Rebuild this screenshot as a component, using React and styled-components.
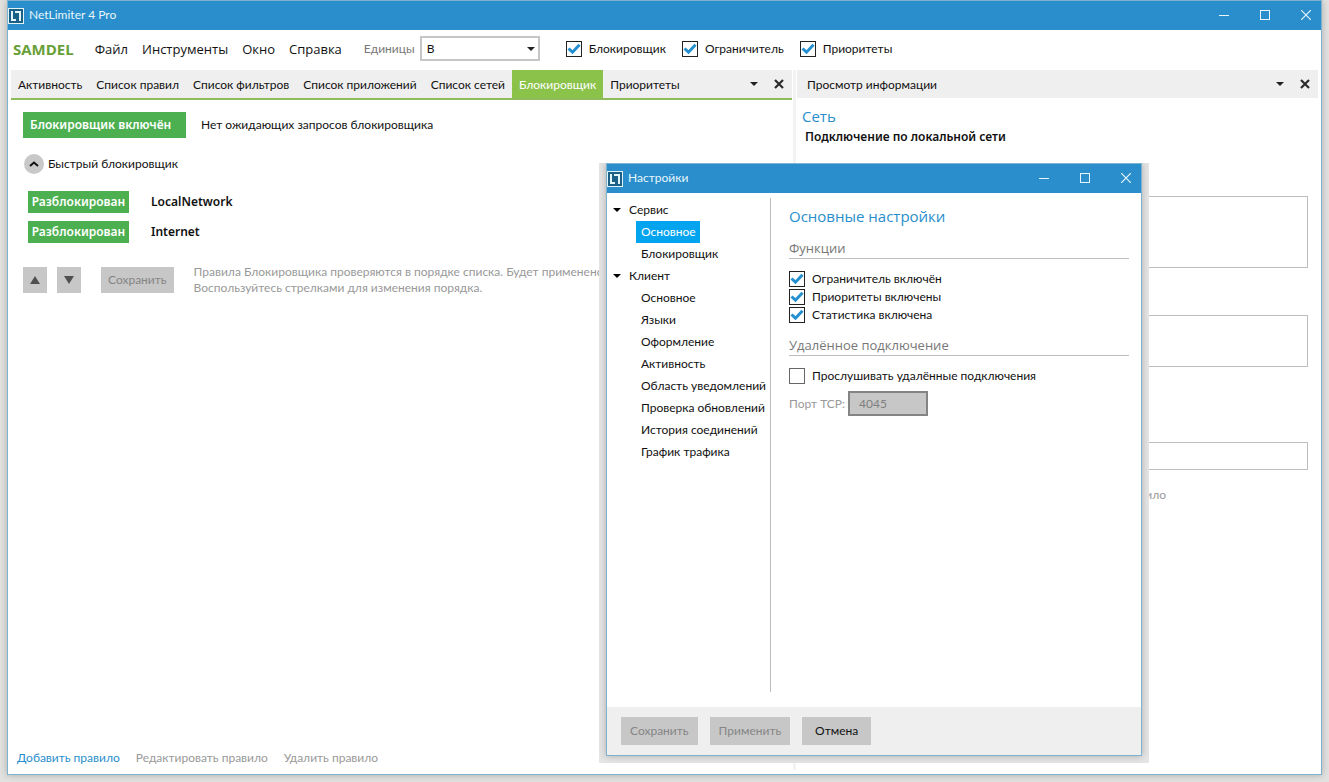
import { useState } from 'react';
import styled, { createGlobalStyle } from 'styled-components';

const GlobalStyle = createGlobalStyle`
  * {
    box-sizing: border-box;
  }
  body {
    margin: 0;
    background: #e2e2e1;
    color: #111;
    font-family: Lato, 'Noto Sans', sans-serif;
    font-size: 12px;
    line-height: 16px;
  }
  button, input, select {
    font: inherit;
    color: inherit;
  }
  button {
    border: 0;
    padding: 0;
    background: none;
  }
  h1, h2, h3, p, ul {
    margin: 0;
    padding: 0;
    font-weight: 400;
    list-style: none;
  }
`;

const Desktop = styled.div`
  position: relative;
  height: 100vh;
  padding: 0 7px 7px;
  overflow: hidden;
`;

const Window = styled.div`
  display: flex;
  flex-direction: column;
  height: 100%;
  background: #fff;
  border: 1px solid #7fb1d0;
  box-shadow: 0 0 7px rgba(0, 0, 0, 0.25);
`;

const TitleBar = styled.header`
  display: flex;
  align-items: center;
  gap: 5px;
  height: 29px;
  padding-right: 9px;
  background: #298ecb;
  color: #e8f6fc;
  flex: none;
`;

const Title = styled.h1`
  flex: 1;
  padding-bottom: 2px;
  font-size: 12px;
`;

const WindowButtons = styled.div`
  display: flex;
  gap: 29px;
  padding-bottom: 2px;
`;

const IconButton = styled.button`
  display: flex;
  align-items: center;
  justify-content: center;
  width: 12px;
  height: 16px;
`;

const MenuBar = styled.nav`
  display: flex;
  align-items: center;
  height: 40px;
  padding: 0 5px 3px;
  flex: none;
`;

const Brand = styled.strong`
  margin-right: 21px;
  color: #689f38;
  font-family: 'Open Sans', sans-serif;
  font-size: 15px;
`;

const MenuList = styled.div`
  display: flex;
  gap: 14px;
  margin-right: 22px;
`;

const MenuItem = styled.button`
  font-family: 'Open Sans', sans-serif;
  font-size: 13px;
`;

const UnitLabel = styled.label`
  margin-right: 5px;
  color: #777;
`;

const SelectWrap = styled.div`
  display: grid;
  align-items: center;
  width: 120px;
  margin-right: 26px;

  > * {
    grid-area: 1 / 1;
  }
  svg {
    justify-self: end;
    margin-right: 5px;
    pointer-events: none;
  }
`;

const Select = styled.select`
  appearance: none;
  width: 100%;
  height: 25px;
  padding: 0 5px;
  border: 2px solid #c6c6c6;
  border-radius: 0;
  background: #fff;
`;

const CheckList = styled.div`
  display: flex;
  flex-direction: ${({ $column }) => ($column ? 'column' : 'row')};
  gap: ${({ $column }) => ($column ? '2px' : '16px')};
`;

const CheckLabel = styled.label`
  display: flex;
  align-items: center;
  gap: 7px;
`;

const CheckBox = styled.span`
  display: grid;

  > * {
    grid-area: 1 / 1;
  }
  svg {
    pointer-events: none;
  }
`;

const CheckInput = styled.input`
  appearance: none;
  width: 16px;
  height: 16px;
  margin: 0;
  border: 1px solid #222;
  background: #fff;

  &:not(:checked) {
    border-color: #666;
  }
  &:not(:checked) + svg {
    display: none;
  }
`;

const Workspace = styled.main`
  display: grid;
  grid-template-columns: 781fr 3px 521fr;
  column-gap: 1px;
  flex: 1;
  min-height: 0;
  padding: 0 3px;
`;

const Splitter = styled.div`
  background: #f3f3f3;
  margin-bottom: 4px;
`;

const Pane = styled.section`
  display: flex;
  flex-direction: column;
  min-width: 0;
  overflow: hidden;
`;

const PaneBar = styled.div`
  display: flex;
  align-items: center;
  height: ${({ $accent }) => ($accent ? '30px' : '28px')};
  padding-right: 7px;
  background: #efefef;
  border-bottom: ${({ $accent }) => ($accent ? '2px solid #8fbc5a' : '0')};
  flex: none;
`;

const PaneTitle = styled.h2`
  padding: 2px 0 0 10px;
  font-size: 12px;
`;

const PaneTools = styled.div`
  display: flex;
  gap: 13px;
  margin-left: auto;
`;

const Tab = styled.button`
  height: 28px;
  padding: 2px 7px 0;
  white-space: nowrap;
  background: ${({ $active }) => ($active ? '#8bc34a' : 'none')};
  color: ${({ $active }) => ($active ? '#fff' : '#111')};
`;

const PaneBody = styled.div`
  display: flex;
  flex-direction: column;
  flex: 1;
  padding: 12px 12px 0;
`;

const StatusRow = styled.div`
  display: flex;
  align-items: center;
  gap: 15px;
`;

const GreenButton = styled.button`
  width: ${({ $large }) => ($large ? '163px' : '101px')};
  height: ${({ $large }) => ($large ? '26px' : '22px')};
  padding: ${({ $large }) => ($large ? '0 7px' : '0')};
  text-align: ${({ $large }) => ($large ? 'left' : 'center')};
  background: #4caf50;
  color: #fff;
  font-family: 'Noto Sans', sans-serif;
  font-weight: 600;
`;

const Expander = styled.button`
  display: flex;
  align-items: center;
  gap: 4px;
  margin: 16px 0 17px 1px;
`;

const Circle = styled.span`
  display: flex;
  align-items: center;
  justify-content: center;
  width: 20px;
  height: 20px;
  border-radius: 50%;
  background: #c8c8c8;
`;

const BlockList = styled.ul`
  display: flex;
  flex-direction: column;
  gap: 8px;
  padding-left: 5px;
`;

const BlockItem = styled.li`
  display: flex;
  align-items: center;
  gap: 22px;
  font-family: 'Noto Sans', sans-serif;
  font-weight: 600;
`;

const OrderRow = styled.div`
  display: flex;
  align-items: center;
  gap: 10px;
  margin-top: 21px;
`;

const GreyButton = styled.button`
  display: flex;
  align-items: center;
  justify-content: center;
  min-width: ${({ $icon }) => ($icon ? '24px' : '69px')};
  height: ${({ $tall }) => ($tall ? '28px' : '26px')};
  padding: ${({ $icon, $tall }) => ($icon ? '0' : $tall ? '0 9px' : '0 7px')};
  background: #c7c7c7;

  &:disabled {
    color: #858585;
  }
`;

const SaveSlot = styled.div`
  margin: 0 10px;
`;

const Hint = styled.p`
  color: #999;
  white-space: nowrap;
`;

const RuleLinks = styled.div`
  display: flex;
  gap: 16px;
`;

const RuleFooter = styled.footer`
  padding: 0 6px 8px;
`;

const RuleLink = styled.a`
  color: ${({ $muted }) => ($muted ? '#999' : '#298ecb')};
  text-decoration: none;
  white-space: nowrap;
`;

const InfoBody = styled.div`
  display: flex;
  flex-direction: column;
  padding: 8px 10px 0 8px;
`;

const InfoTitle = styled.h2`
  margin: 0 0 3px -3px;
  color: #298ecb;
  font-family: 'Open Sans', sans-serif;
  font-size: 15px;
  line-height: 20px;
`;

const InfoName = styled.strong`
  margin-bottom: 51px;
  font-family: 'Noto Sans', sans-serif;
  font-weight: 600;
`;

const InfoBox = styled.div`
  height: ${({ $height }) => $height}px;
  margin-bottom: ${({ $space }) => $space}px;
  border: 1px solid #bdbdbd;
`;

const DialogFrame = styled.div`
  position: absolute;
  left: 599px;
  top: 163px;
  width: 550px;
  height: 600px;
  padding: 0 7px 7px;
  overflow: hidden;
  background: #e5e5e5;
`;

const DialogBody = styled.div`
  display: grid;
  grid-template-columns: 164px 1fr;
  flex: 1;
  padding: 5px 12px 15px 0;
`;

const Tree = styled.ul`
  padding-top: 1px;
  padding-left: 6px;
  border-right: 1px solid #bdbdbd;
`;

const TreeGroup = styled.button`
  display: flex;
  align-items: center;
  gap: 8px;
  height: 22px;
`;

const TreeItem = styled.button`
  display: block;
  height: 22px;
  margin-left: 23px;
  padding: 0 4px 0 5px;
  white-space: nowrap;
  background: ${({ $active }) => ($active ? '#03a4ef' : 'none')};
  color: ${({ $active }) => ($active ? '#fff' : '#111')};
`;

const Settings = styled.div`
  padding: 8px 0 0 18px;
`;

const SettingsTitle = styled.h2`
  color: #298ecb;
  font-family: 'Open Sans', sans-serif;
  font-size: 15px;
  line-height: 20px;
`;

const SectionTitle = styled.h3`
  margin: 13px 0 12px;
  padding-bottom: 1px;
  border-bottom: 1px solid #bdbdbd;
  color: #777;
  font-family: 'Open Sans', sans-serif;
  font-size: 13px;
  line-height: 18px;
`;

const PortRow = styled.div`
  display: flex;
  align-items: center;
  gap: 3px;
  margin-top: 7px;
  color: #999;
`;

const PortInput = styled.input`
  width: 80px;
  height: 25px;
  padding: 0 9px;
  border: 2px solid #848484;
  background: #c7c7c7;
  color: #808080;
`;

const DialogFooter = styled.footer`
  display: flex;
  align-items: center;
  gap: 12px;
  height: 48px;
  padding: 0 14px;
  background: #efefef;
`;

const Logo = () => (
  <svg width="16" height="16" viewBox="0 0 16 16" fill="none">
    <rect x="0.5" y="0.5" width="15" height="15" fill="#1a6087" stroke="#e4f5fa" />
    <path d="M4 3v9h4M7 4h5v9" stroke="#e4f5fa" strokeWidth="2" />
  </svg>
);

const Arrow = ({ color = '#222' }) => (
  <svg width="8" height="4" viewBox="0 0 8 4">
    <path d="M0 0H8L4 4Z" fill={color} />
  </svg>
);

const OrderArrow = ({ up }) => (
  <svg width="10" height="8" viewBox="0 0 10 8">
    <path d={up ? 'M0 8L5 0L10 8Z' : 'M0 0H10L5 8Z'} fill="#505050" />
  </svg>
);

const Cross = () => (
  <svg width="10" height="10" viewBox="0 0 10 10">
    <path d="M1 1L9 9M9 1L1 9" stroke="#2b2b2b" strokeWidth="2.2" />
  </svg>
);

const Check = ({ label, defaultChecked }) => (
  <CheckLabel>
    <CheckBox>
      <CheckInput type="checkbox" defaultChecked={defaultChecked} />
      <svg width="16" height="16" viewBox="0 0 16 16" fill="none">
        <path d="M2.5 7.5L6.5 11.2L13.5 3.8" stroke="#2490d0" strokeWidth="3" />
      </svg>
    </CheckBox>
    {label}
  </CheckLabel>
);

const Caption = ({ title }) => (
  <TitleBar>
    <Logo />
    <Title>{title}</Title>
    <WindowButtons>
      <IconButton aria-label="Свернуть">
        <svg width="10" height="10" viewBox="0 0 10 10">
          <path d="M0 5.5H10" stroke="#e8f6fc" />
        </svg>
      </IconButton>
      <IconButton aria-label="Развернуть">
        <svg width="10" height="10" viewBox="0 0 10 10" fill="none">
          <rect x="0.5" y="0.5" width="9" height="9" stroke="#e8f6fc" />
        </svg>
      </IconButton>
      <IconButton aria-label="Закрыть">
        <svg width="10" height="10" viewBox="0 0 10 10">
          <path d="M0 0L10 10M10 0L0 10" stroke="#e8f6fc" strokeWidth="1.2" />
        </svg>
      </IconButton>
    </WindowButtons>
  </TitleBar>
);

const Tools = () => (
  <PaneTools>
    <IconButton aria-label="Меню панели"><Arrow /></IconButton>
    <IconButton aria-label="Закрыть панель"><Cross /></IconButton>
  </PaneTools>
);

const Links = () => (
  <RuleLinks>
    <RuleLink href="#add">Добавить правило</RuleLink>
    <RuleLink href="#edit" $muted>Редактировать правило</RuleLink>
    <RuleLink href="#remove" $muted>Удалить правило</RuleLink>
  </RuleLinks>
);

const menu = ['Файл', 'Инструменты', 'Окно', 'Справка'];
const toggles = ['Блокировщик', 'Ограничитель', 'Приоритеты'];
const tabs = [
  'Активность',
  'Список правил',
  'Список фильтров',
  'Список приложений',
  'Список сетей',
  'Блокировщик',
  'Приоритеты',
];
const tree = [
  { name: 'Сервис', items: ['Основное', 'Блокировщик'] },
  {
    name: 'Клиент',
    items: [
      'Основное',
      'Языки',
      'Оформление',
      'Активность',
      'Область уведомлений',
      'Проверка обновлений',
      'История соединений',
      'График трафика',
    ],
  },
];

const SettingsDialog = () => {
  const [page, setPage] = useState('Сервис/Основное');

  return (
    <DialogFrame role="dialog" aria-label="Настройки">
      <Window>
        <Caption title="Настройки" />
        <DialogBody>
          <Tree>
            {tree.map((group) => (
              <li key={group.name}>
                <TreeGroup><Arrow color="#000" />{group.name}</TreeGroup>
                {group.items.map((item) => {
                  const id = `${group.name}/${item}`;
                  return (
                    <TreeItem key={id} $active={page === id} onClick={() => setPage(id)}>
                      {item}
                    </TreeItem>
                  );
                })}
              </li>
            ))}
          </Tree>
          <Settings>
            <SettingsTitle>Основные настройки</SettingsTitle>
            <SectionTitle>Функции</SectionTitle>
            <CheckList $column>
              <Check label="Ограничитель включён" defaultChecked />
              <Check label="Приоритеты включены" defaultChecked />
              <Check label="Статистика включена" defaultChecked />
            </CheckList>
            <SectionTitle>Удалённое подключение</SectionTitle>
            <Check label="Прослушивать удалённые подключения" />
            <PortRow>
              <label htmlFor="port">Порт TCP:</label>
              <PortInput id="port" defaultValue="4045" disabled />
            </PortRow>
          </Settings>
        </DialogBody>
        <DialogFooter>
          <GreyButton $tall disabled>Сохранить</GreyButton>
          <GreyButton $tall disabled>Применить</GreyButton>
          <GreyButton $tall>Отмена</GreyButton>
        </DialogFooter>
      </Window>
    </DialogFrame>
  );
};

const App = () => {
  const [tab, setTab] = useState('Блокировщик');

  return (
    <Desktop>
      <GlobalStyle />
      <Window>
        <Caption title="NetLimiter 4 Pro" />
        <MenuBar>
          <Brand>SAMDEL</Brand>
          <MenuList>
            {menu.map((item) => <MenuItem key={item}>{item}</MenuItem>)}
          </MenuList>
          <UnitLabel htmlFor="units">Единицы</UnitLabel>
          <SelectWrap>
            <Select id="units" defaultValue="B">
              <option>B</option>
            </Select>
            <Arrow />
          </SelectWrap>
          <CheckList>
            {toggles.map((item) => <Check key={item} label={item} defaultChecked />)}
          </CheckList>
        </MenuBar>
        <Workspace>
          <Pane>
            <PaneBar $accent>
              {tabs.map((item) => (
                <Tab key={item} $active={item === tab} onClick={() => setTab(item)}>
                  {item}
                </Tab>
              ))}
              <Tools />
            </PaneBar>
            <PaneBody>
              <StatusRow>
                <GreenButton $large>Блокировщик включён</GreenButton>
                <span>Нет ожидающих запросов блокировщика</span>
              </StatusRow>
              <Expander>
                <Circle>
                  <svg width="10" height="6" viewBox="0 0 10 6" fill="none">
                    <path d="M1 5L5 1.5L9 5" stroke="#111" strokeWidth="2" />
                  </svg>
                </Circle>
                Быстрый блокировщик
              </Expander>
              <BlockList>
                <BlockItem><GreenButton>Разблокирован</GreenButton>LocalNetwork</BlockItem>
                <BlockItem><GreenButton>Разблокирован</GreenButton>Internet</BlockItem>
              </BlockList>
              <OrderRow>
                <GreyButton $icon aria-label="Вверх"><OrderArrow up /></GreyButton>
                <GreyButton $icon aria-label="Вниз"><OrderArrow /></GreyButton>
                <SaveSlot><GreyButton disabled>Сохранить</GreyButton></SaveSlot>
                <Hint>
                  Правила Блокировщика проверяются в порядке списка. Будет применено
                  <br />
                  Воспользуйтесь стрелками для изменения порядка.
                </Hint>
              </OrderRow>
            </PaneBody>
            <RuleFooter><Links /></RuleFooter>
          </Pane>
          <Splitter />
          <Pane>
            <PaneBar>
              <PaneTitle>Просмотр информации</PaneTitle>
              <Tools />
            </PaneBar>
            <InfoBody>
              <InfoTitle>Сеть</InfoTitle>
              <InfoName>Подключение по локальной сети</InfoName>
              <InfoBox $height={72} $space={47} />
              <InfoBox $height={52} $space={75} />
              <InfoBox $height={28} $space={17} />
              <Links />
            </InfoBody>
          </Pane>
        </Workspace>
      </Window>
      <SettingsDialog />
    </Desktop>
  );
};

export default App;
